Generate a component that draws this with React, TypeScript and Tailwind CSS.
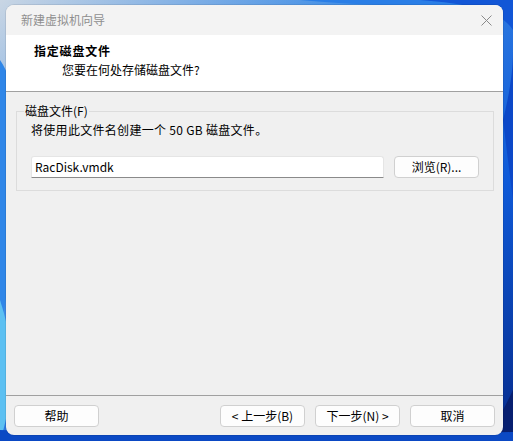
import type { ReactNode } from "react";

const font = { fontFamily: '"Noto Sans CJK SC", "Noto Sans", sans-serif' };

function Wallpaper() {
  return (
    <svg className="absolute inset-0 h-full w-full" viewBox="0 0 513 441" preserveAspectRatio="none" aria-hidden="true">
      <defs>
        <linearGradient id="wp" x1="0" y1="0" x2="1" y2="1">
          <stop offset="0" stopColor="#c9d6e4" />
          <stop offset="0.35" stopColor="#3f8de6" />
          <stop offset="0.7" stopColor="#0f5ad8" />
          <stop offset="1" stopColor="#062a8a" />
        </linearGradient>
      </defs>
      <rect width="513" height="441" fill="url(#wp)" />
      <path d="M0 60 C40 120 10 260 0 340 L0 60 Z" fill="#2f86e8" />
      <path d="M0 300 C20 360 10 410 0 441 L0 300 Z" fill="#5cc0f2" />
      <path d="M300 0 C400 10 470 0 513 20 L513 0 Z" fill="#2a7ee6" />
      <path d="M420 0 C470 4 500 10 513 30 L513 0 Z" fill="#1256d6" />
      <path d="M503 120 C513 80 513 60 513 50 L513 200 Z" fill="#0c48c8" />
      <path d="M480 441 C500 420 508 400 513 390 L513 441 Z" fill="#071f70" />
      <path d="M0 430 C200 436 380 436 513 432 L513 441 L0 441 Z" fill="#0b49c4" />
    </svg>
  );
}

function WinButton({ children, className = "" }: { children: ReactNode; className?: string }) {
  return (
    <button
      type="button"
      className={`h-[22px] w-[85px] rounded-[4px] border border-[#d0d0d0] bg-[#fdfdfd] text-[12px] leading-[16px] text-black flex items-center justify-center ${className}`}
    >
      {children}
    </button>
  );
}

export default function App() {
  return (
    <div className="relative w-[513px] h-[441px] overflow-hidden" style={font}>
      <Wallpaper />
      <div className="relative pt-[5px] pl-[6px]">
        <div className="w-[497px] h-[430px] rounded-[8px] overflow-hidden bg-[#f0f0f0] flex flex-col shadow-[0_0_0_1px_rgba(0,0,0,0.08)]">
          {/* title bar */}
          <div className="h-[30px] shrink-0 bg-[#f3f3f3] flex items-center justify-between pl-[15px] pr-[11px]">
            <span className="text-[12px] leading-[16px] text-[#8f8f8f]">新建虚拟机向导</span>
            <svg width="11" height="11" viewBox="0 0 11 11" aria-hidden="true">
              <path d="M0.5 0.5 L10.5 10.5 M10.5 0.5 L0.5 10.5" stroke="#8a8a8a" strokeWidth="1" />
            </svg>
          </div>

          {/* header */}
          <div className="h-[57px] shrink-0 bg-white border-b border-[#a0a0a0] pt-[8px] flex flex-col gap-[3px]">
            <span className="pl-[28px] text-[12px] leading-[16px] font-bold tracking-[0.8px] text-black">指定磁盘文件</span>
            <span className="pl-[56px] text-[12px] leading-[16px] text-black">您要在何处存储磁盘文件?</span>
          </div>

          {/* body */}
          <div className="flex-1 px-[10px] pt-[11px]">
            <fieldset className="border border-[#dcdcdc] pl-[7px] pr-[14px] pb-[12px]">
              <legend className="px-[1px] text-[12px] leading-[16px] text-black">磁盘文件(F)</legend>
              <div className="pl-[7px] pt-[3px] flex flex-col">
                <p className="text-[12px] leading-[16px] tracking-[0.3px] text-black">将使用此文件名创建一个 50 GB 磁盘文件。</p>
                <div className="mt-[18px] flex items-center gap-[10px]">
                  <div className="h-[22px] w-[353px] bg-white border border-[#e5e5e5] border-b-[#8a8a8a] rounded-t-[3px] flex items-center px-[3px]">
                    <span className="text-[12px] leading-[16px] text-black">RacDisk.vmdk</span>
                  </div>
                  <WinButton className="w-[84px] h-[21px]">浏览(R)...</WinButton>
                </div>
              </div>
            </fieldset>
          </div>

          {/* footer */}
          <div className="shrink-0 border-t border-[#a0a0a0] pt-[9px] pb-[8px] px-[8px] flex items-center">
            <WinButton>帮助</WinButton>
            <div className="ml-auto flex gap-[10px]">
              <WinButton>&lt; 上一步(B)</WinButton>
              <WinButton>下一步(N) &gt;</WinButton>
              <WinButton>取消</WinButton>
            </div>
          </div>
        </div>
      </div>
    </div>
  );
}
